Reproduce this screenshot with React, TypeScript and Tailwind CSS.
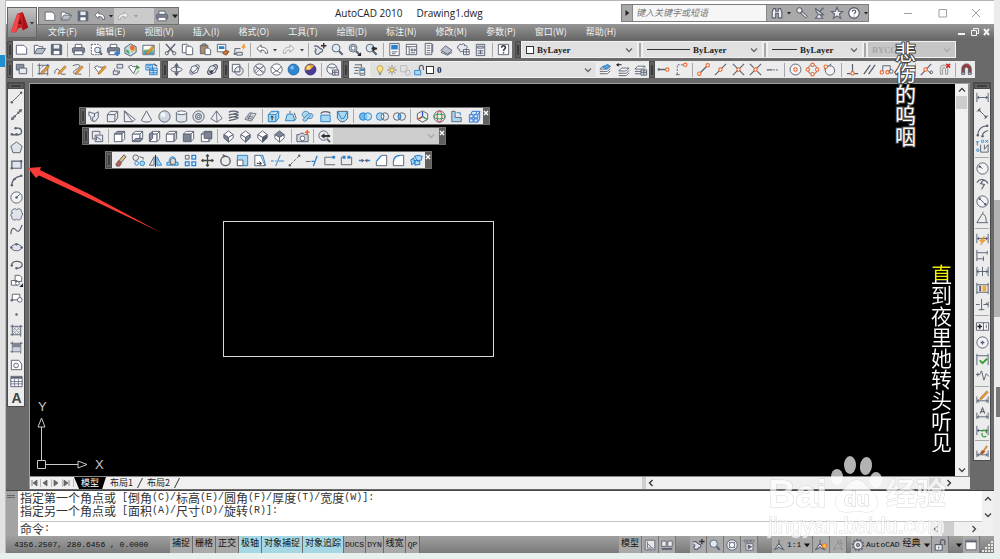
import type { ReactNode } from 'react';
import clsx from 'clsx';

const INK = '#5a6172';
const ORANGE = '#ea6a35';
const BLUE = '#2b82cc';
const PALE = '#a9d8f2';
const SHADE = '#cdd2da';

// All glyphs are drawn on a 16 x 16 grid, stroke colour comes from <Icon>
const floppy = (
  <>
    <path d="M2.5 2.5h10l1 1v10h-11z" fill="#5d6678" />
    <path d="M5 3h6v4H5z" fill="#e9edf2" stroke="none" />
    <path d="M5 9.5h6V13H5z" fill="#fff" stroke="none" />
  </>
);
const printer = (
  <>
    <path d="M4.5 6V2.5h7V6" fill="#fff" />
    <rect x="1.5" y="6" width="13" height="5.5" rx="1.5" fill="#7b818e" />
    <path d="M4 9.5h8l1 4H3z" fill="#fff" />
  </>
);
const sheet = <path d="M2.5 3.5h8l3 3v6.500h-11z" fill="#fff" />;
const folder = (
  <>
    <path d="M2.500 12.500v-9h4l1 1.500h4v2" fill="#fff" />
    <path d="M2.500 12.500l3-5.500h9l-3.500 5.500z" fill="#b9bfca" />
  </>
);
const undo = <path d="M2 7l4.500-4v2.500c4 0 7 1.500 7 6.500h-2.500c0-2.500-1.500-3.500-4.500-3.500V11z" fill="#fff" />;
const redo = (
  <path d="M14 7L9.500 3v2.500c-4 0-7 1.500-7 6.500H5c0-2.500 1.500-3.500 4.500-3.500V11z" fill="#eee" stroke="#a3a6ad" />
);
const lens = (
  <>
    <path d="M9.500 9.500l4 4" strokeWidth="2.200" />
    <circle cx="6.500" cy="6.500" r="4.200" fill="#dceaf2" />
  </>
);
const pencil = <path d="M6 11l6.500-7 1.500 1.500-6.500 7-2.200.5z" fill="#e9a03c" stroke="#a3641c" strokeWidth=".7" />;
const layers = <path d="M5 4.500h8l-3 3H2zM2 10h8l3-3M2 12.500h8l3-3" fill="#fff" />;
const node = (x: number, y: number) => <circle cx={x} cy={y} r="1.800" fill="#fff" stroke={ORANGE} strokeWidth="1.200" />;
const dot = (x: number, y: number) => <circle cx={x} cy={y} r="1.300" fill={INK} stroke="none" />;
const cube = (top: string, side: string, front: string) => (
  <>
    <path d="M2.500 5.500l3-3h8l-3 3z" fill={top} />
    <path d="M10.500 5.500l3-3v8l-3 3z" fill={side} />
    <path d="M2.500 5.500h8v8h-8z" fill={front} />
  </>
);
const isoCube = (top: string, left: string, right: string) => (
  <>
    <path d="M8 2l5 4-5 3-5-3z" fill={top} />
    <path d="M3 6l5 3v5L3 9.500z" fill={left} />
    <path d="M13 6L8 9v5l5-4.500z" fill={right} />
  </>
);
const dimension = <path d="M2 3v10M14 3v10M2.500 8h11M4.500 6.500L2.500 8l2 1.500M11.500 6.500l2 1.500-2 1.500" />;
const lowDimension = <path d="M2 7v7M14 7v7M2.500 11.500h11M4.500 10l-2 1.500 2 1.500M11.500 10l2 1.500-2 1.500" />;
const crop = <path d="M3.500 1.500v12M1.500 3.500h13M12.500 2v12.500M1.500 12.500H12" />;

const icons: Record<string, ReactNode> = {
  new: sheet,
  open: folder,
  save: floppy,
  print: printer,
  preview: (
    <>
      <path d="M2.500 2.500h8l2 2v9h-10z" fill="#fff" strokeDasharray="2 1" />
      <circle cx="9" cy="8.500" r="3" fill="#e4eef5" />
      <path d="M11 10.500l3 3" strokeWidth="2" />
    </>
  ),
  publish: (
    <>
      {printer}
      <path d="M9 12h6M12 9v6" stroke={BLUE} strokeWidth="2" />
    </>
  ),
  dwf: (
    <>
      <path d="M2 6l6-4 6 3v6l-6 4-6-3z" fill="#b9dcef" />
      <path d="M7 5l4-1.500L13 9l-4 2z" fill="#f0b840" stroke="none" />
      <path d="M3 8l3 1 1 4-3-2z" fill="#4ca44c" stroke="none" />
      <circle cx="10" cy="6" r="2.500" fill="#e66a3a" stroke="none" />
    </>
  ),
  markup: (
    <>
      <path d="M2 3.500h12v10H2z" fill="#fff" />
      <path d="M2.500 8h11v5h-11z" fill="#8fba5b" stroke="none" />
      <path d="M2.500 10l4-1 3 2 4-1v3h-11z" fill="#4fa0c9" stroke="none" />
      {pencil}
    </>
  ),
  cut: (
    <>
      <path d="M3 2l8 9M13 2l-8 9" strokeWidth="1.600" />
      <circle cx="4" cy="12" r="1.700" />
      <circle cx="12" cy="12" r="1.700" />
    </>
  ),
  copyClip: (
    <>
      <path d="M2.500 2.500h5l2 2v7h-7z" fill="#fff" />
      <path d="M6.500 4.500h5l2 2v7h-7z" fill="#fff" />
    </>
  ),
  paste: (
    <>
      <path d="M2.500 3.500h8v9h-8z" fill="#b38b62" />
      <path d="M4.500 2h4v2h-4z" fill="#aaa" />
      <path d="M7.500 6.500h4l2 2v5h-6z" fill="#fff" />
    </>
  ),
  matchProps: (
    <>
      <path d="M2.500 2.500h9v8h-9z" fill="#fff" />
      <path d="M4 4.500h6v3H4z" fill={BLUE} stroke="none" />
      <path d="M8 12l3-3 4 1-3 4z" fill="#c9773a" stroke="#7d4a22" />
    </>
  ),
  blockEdit: (
    <>
      <path d="M3 11V7h6M5 11h6v3H5z" fill="#dfe4ea" />
      {dot(3, 12.5)}
      <path d="M12 2l-2 4h2l-1 3 4-4.500h-2l1-2.500z" fill="#f0a030" stroke="none" />
    </>
  ),
  undo,
  redo,
  pan: (
    <>
      <path d="M2 4.500c3-1 5 .5 6 2l3 1.500c1 1.500-.5 3-2 3l-2 2H4.500L3 10c2-1 2-2 0-3" fill="#dfe3ea" strokeWidth="1.200" />
      <path d="M12.500 1v6M9.500 4h6" stroke="#333" strokeWidth="1.500" />
    </>
  ),
  zoom: lens,
  zoomWindow: (
    <>
      {lens}
      <path d="M4.500 4.500h4v4h-4z" fill="#fff" />
      <path d="M15 15h-4l4-4z" fill="#222" stroke="none" />
    </>
  ),
  zoomPrev: (
    <>
      {lens}
      <path d="M14 7L9 4.500V10z" fill="#222" stroke="none" />
      <path d="M14 7l-6 0" strokeWidth="2" stroke="#333" />
    </>
  ),
  props: (
    <>
      <path d="M3 1.500h10v13H3z" fill="#fff" />
      <path d="M4.500 3h7v5h-7z" fill={BLUE} stroke="none" />
      <path d="M5 10.500h6M5 12.500h4" />
    </>
  ),
  designCenter: (
    <>
      <path d="M2.500 2.500h11v11h-11z" fill="#fff" />
      <path d="M2.500 5h11M5.500 5v8M7.500 7.500h2v2h-2zM11 7.500h1v2h-1zM7 11.500h5" />
    </>
  ),
  toolPalette: (
    <>
      <path d="M4.500 1.500h7v12h-7z" fill="#fff" />
      <path d="M12.500 2v9M6 4h4M6 6.500h4M6 9h4M6 11.500h4" />
    </>
  ),
  sheetSet: (
    <>
      <path d="M2 9l5-5 7 5-5 4z" fill="#bcc3ce" />
      <path d="M2 11l7 3 5-3" />
    </>
  ),
  markupSet: (
    <>
      <path d="M3 4c0-2 3-2 3-1 1-2 4-1 3 1 3-1 4 2 2 3v3c-1 2-3 1-4 0-2 1-4 0-3-2-3 0-3-4-1-4z" fill="#e6eaf0" />
      <path d="M8 8h6v5.500H8zM8 10.500h6M11 8v5" fill="#fff" />
    </>
  ),
  calc: (
    <>
      <path d="M3.500 2.500h9v12h-9z" fill="#e9ecf1" />
      <path d="M5 4.500h6v2H5zM5 9.500h6M5 12h6M8 8.500v4.500" />
    </>
  ),
  help: (
    <>
      <path d="M2.500 2.500h11v11h-11z" fill="#fff" />
      <path d="M6 6c0-2.500 4-2.500 4 0 0 1.500-2 1.500-2 3.500M8 11v1.200" strokeWidth="1.600" stroke="#333" />
    </>
  ),
  drawOrder: (
    <>
      <path d="M2.500 2.500h8v6h-8z" fill="#8a919e" />
      <path d="M5.500 6.500h8v6h-8z" fill="#e6e9ee" />
    </>
  ),
  editHatch: (
    <>
      {crop}
      <path d="M4 8l4-4M4 12l8-8" strokeDasharray="1 1" />
      {pencil}
    </>
  ),
  editPline: (
    <>
      <path d="M2 12.500c-1-4 3-7 5-3l2 3.500h4.500" />
      {pencil}
    </>
  ),
  editSpline: (
    <>
      <path d="M3 4c7-3 10 0 5 3s-8 6 4 6" />
      {pencil}
    </>
  ),
  attrEdit: (
    <>
      <path d="M1.500 5.500l3-1.500 2 1.500h4L7 12.500z" fill="#fff" />
      {pencil}
    </>
  ),
  blockAttr: (
    <>
      <path d="M7.500 2.500h6v4h-6zM3.500 9.500h5v4h-5zM5 9V7M10 9v3h-1.500" fill="#dfe4ea" />
    </>
  ),
  syncAttr: (
    <>
      <path d="M1.500 5l3-1.500 2 1.500h4L7 12.500z" fill="#fff" />
      <path d="M10 3l4 3-4 2z" fill="#3f9a3f" stroke="none" />
      <path d="M12 9c0 2-1 3-3 4" stroke="#3f9a3f" />
    </>
  ),
  extractAttr: (
    <>
      <path d="M2 2.500h7v6H2zM6 6.500h8v7H6z" fill="#cfe6f6" stroke={BLUE} />
      <path d="M6 9h8M6 11.500h8M10 7v6M3 4h5M3 6h3" stroke={BLUE} />
      <path d="M10 2l4 2.500" stroke={INK} strokeWidth="1.500" />
    </>
  ),
  orbit: (
    <>
      <ellipse cx="8" cy="8" rx="6" ry="2.500" />
      <path d="M8 2v12M6 5l2-3 2 3M6 11l2 3 2-3" strokeWidth="1.400" />
    </>
  ),
  freeOrbit: (
    <>
      <ellipse cx="8" cy="8" rx="6.500" ry="3" transform="rotate(-45 8 8)" />
      <circle cx="8" cy="8" r="4" fill="#eef1f5" />
      <path d="M5 11c2 0 5-2 6-5" />
    </>
  ),
  contOrbit: (
    <>
      <ellipse cx="8" cy="8" rx="6.500" ry="3" transform="rotate(-45 8 8)" strokeWidth="1.400" />
      <circle cx="8" cy="8" r="4" fill="#e3e7ec" />
      <path d="M5 11c2 0 5-2 6-5" />
      <path d="M5 9l4 0-2 4z" fill="#333" stroke="none" />
    </>
  ),
  wire2d: (
    <>
      <path d="M2.500 2.500h8v8h-8z" fill="#f7f7f7" />
      <circle cx="9.500" cy="9.500" r="4.500" fill="#e3e7ec" fillOpacity=".7" />
      <path d="M10.500 5v5.500H5" />
    </>
  ),
  wire3d: (
    <>
      <circle cx="8" cy="8" r="6" fill="#f4f4f4" />
      <path d="M3.500 4.500c2 3 7 3 9 0M3 11c2-5 3-5 5-3s3 1 5 3M4 4l8 8M12 4l-8 8" strokeWidth=".8" />
    </>
  ),
  hidden3d: (
    <>
      <circle cx="8" cy="8" r="6" fill="#fff" />
      <path d="M3 5l5 5 5-5M4 12l4-3 4 3" />
    </>
  ),
  realistic: (
    <>
      <circle cx="8" cy="8" r="5.800" fill="#2f86cf" stroke="#1f66a8" />
      <circle cx="6.500" cy="6" r="2" fill="#7cbcf0" stroke="none" />
    </>
  ),
  conceptual: (
    <>
      <circle cx="8" cy="8" r="5.800" fill="#4b3a96" stroke="#3b2c7a" />
      <path d="M2.500 9A5.800 5.800 0 0112 4L8 8z" fill="#e9a13a" stroke="none" />
      <circle cx="6" cy="6" r="2" fill="#ffdf80" stroke="none" />
    </>
  ),
  visualMgr: (
    <>
      <circle cx="7.500" cy="7.500" r="5.500" fill="#f4f4f4" />
      <path d="M3 5c3 2 6 2 9 0M8 8.500h6.500v5.500H8zM8 11h6M10.500 9v5" fill="#dfe4ea" />
    </>
  ),
  layerMgr: (
    <>
      <path d="M3 3h7M2 6h6M3 9h4M2 12h5M10 2v4" />
      <path d="M8.500 6.500h5v7.500h-5z" fill="#fff" />
      <path d="M9 7.500h4v2H9z" fill={BLUE} stroke="none" />
      <path d="M9 12h4" />
    </>
  ),
  layerCurrent: (
    <>
      {layers}
      <path d="M5 5.500l5-3 3 2-4 3z" fill="#52a5e0" stroke={BLUE} />
    </>
  ),
  layerPrev: (
    <>
      <g transform="translate(2 2)">{layers}</g>
      <path d="M1 3l3-2v1.500h3v1H4V5z" fill="#222" stroke="none" />
    </>
  ),
  layerState: (
    <>
      {layers}
      <path d="M8.500 8.500h6v5.500h-6zM8.500 11h6M11.500 8.500v5" fill="#dfe4ea" />
    </>
  ),
  track: <>{node(12, 8)}<path d="M4 8h6" strokeWidth="1.500" />{dot(3, 8)}</>,
  snapFrom: <>{node(12, 3)}<path d="M3.500 13V3H10" strokeDasharray="2 1.500" /><path d="M2 13.500h4" /></>,
  endpoint: <><path d="M4 12l8-8" strokeWidth="1.400" />{node(3.5, 12.5)}{node(12.5, 3.5)}</>,
  midpoint: <><path d="M2 14L14 2" strokeWidth="1.200" />{node(8, 8)}</>,
  intersection: <><path d="M2 14L14 2M2 2l12 12" strokeWidth="1.200" />{node(8, 8)}</>,
  apparent: <><path d="M2 14L14 2M2 2l4 4M10 10l4 4" strokeWidth="1.200" />{node(8, 8)}</>,
  extension: <path d="M2 8.500h6M9 8.500h1.500M12 8.500h1.500" strokeWidth="1.300" />,
  center: <><circle cx="8" cy="8" r="5.800" fill="#f2f3f6" />{node(8, 8)}</>,
  quadrant: <><circle cx="8" cy="8" r="5" />{node(8, 3)}{node(8, 13)}{node(3, 8)}{node(13, 8)}</>,
  tangent: <><circle cx="8.500" cy="9" r="5" fill="#f2f3f6" /><path d="M2 8l8-6" />{node(4, 5)}</>,
  perpendicular: <><path d="M8 2v9M2 12.500h12" strokeWidth="1.300" />{node(8, 12)}</>,
  parallel: <path d="M2 13L9 3M7 13l7-10" strokeWidth="1.400" />,
  insertion: <><path d="M4 10V4h8v5" />{node(3, 11)}{node(9, 11)}<circle cx="13" cy="10" r="2" /></>,
  nodeSnap: node(8, 8),
  nearest: <><path d="M2 14L13 2" strokeWidth="1.200" />{node(7, 8)}<path d="M9 9l4 3" /><circle cx="13" cy="11" r="1.500" /></>,
  snapNone: (
    <>
      <path d="M3.500 13V7a4 4 0 018 0v6H9V7.500a1.500 1.500 0 00-3 0V13z" fill="#ddd" stroke="#999" />
      <path d="M10 2l4 4M14 2l-4 4" stroke="#d22" strokeWidth="1.600" />
    </>
  ),
  snapSettings: (
    <>
      <path d="M3 13V7a5 5 0 0110 0v6h-3V7.500a2 2 0 00-4 0V13z" fill="#9c3b36" />
      <path d="M3 11h3v2H3zM10 11h3v2h-3z" fill="#eee" />
    </>
  ),
  // solids
  polysolid: <path d="M2 3l6 2v3l-2 1v4L4 11V8L2 7zM8 5l4-2v6l-3 4H6M8 5v3" fill="#e7eaef" />,
  box: <path d="M2.500 6l3-3.500h8v7l-3 4h-8zM2.500 6h8l3-3.500M10.500 6v7.500" fill="#eceef2" />,
  wedge: <path d="M2.500 2v11.500h9L14 11zM2.500 2l9 11.500" fill="#eceef2" />,
  cone: <path d="M8 2L2.500 12c2 2.500 9 2.500 11 0z" fill="#eceef2" />,
  sphere: <><circle cx="8" cy="8" r="6" fill="#cfd8e2" /><circle cx="6.500" cy="6" r="2.500" fill="#f4f7fa" stroke="none" /></>,
  cylinder: <><path d="M2.500 4v8.500c2 2 9 2 11 0V4" fill="#dfe4ea" /><ellipse cx="8" cy="4" rx="5.500" ry="2" fill="#f8f9fa" /></>,
  torus: <><circle cx="8" cy="8" r="6" fill="#e3e7ec" /><circle cx="8" cy="8" r="3.200" fill="#c7cdd6" /><circle cx="8" cy="8" r="1.200" fill="#fff" /></>,
  pyramid: <path d="M8 2L2 10.500l6.500 3.500 5.500-4zM8 2l.5 12" fill="#eceef2" strokeWidth=".9" />,
  helix: <path d="M3 3.500c2-1.500 8-1.500 10 0-2 2-8 2-10 3 2-1.500 8-1.500 10 0-2 2-8 2-10 3 2-1.500 8-1.500 10 0-2 2-8 2-10 3" strokeWidth="1.300" />,
  planar: <path d="M2 11l5-7 7 1-5 8zM5 7l6 2M4 9l6 2M9 4l-4 8" fill="#cfd3da" strokeWidth=".8" />,
  extrude: <><path d="M2.500 6l3-3.500h8v7l-3 4h-8zM2.500 6h8l3-3.500M10.500 6v7.500" fill={PALE} stroke={BLUE} /><path d="M6.500 12V8M5 9l1.500-1.500L8 9" stroke="#222" /></>,
  presspull: <><path d="M4.500 5.500h6l2 7h-10z" fill={PALE} stroke={BLUE} /><path d="M12.500 12L14 10l-2-6M7.500 5V2" /></>,
  sweep: <path d="M3.500 3.500c2-2 6-1 6 1.500h3c2 1 1.500 4-.5 5H8c0 3.500-4.500 4-5 1.500L5 9C2 8.500 1.500 5.500 3.500 3.500zM5 9l4.500-4M8 10l4-4" fill={PALE} stroke="#4d83ad" />,
  revolve: <><path d="M3 6.500h10v7H3z" fill={PALE} stroke={BLUE} /><path d="M3 5c1-3 9-3 10 0l-1-2" strokeWidth="1.300" /></>,
  loft: <><path d="M2.500 2.500h11V10L10 13.500H6L2.500 10z" fill={PALE} /><path d="M3 3l3.500 7h3L13 3" stroke={BLUE} /></>,
  union: <><circle cx="5.500" cy="8" r="4" fill="#6fbdf0" stroke={BLUE} /><circle cx="10.500" cy="8" r="4" fill={PALE} fillOpacity=".6" stroke={BLUE} /></>,
  subtract: <><circle cx="10.500" cy="8" r="4" /><circle cx="5.500" cy="8" r="4" fill={PALE} stroke={BLUE} /><path d="M8 5a4 4 0 000 6 4 4 0 000-6z" fill="#fff" /></>,
  intersect: <><circle cx="5.500" cy="8" r="4" /><circle cx="10.500" cy="8" r="4" /><path d="M8 5a4 4 0 000 6 4 4 0 000-6z" fill="#6fbdf0" stroke={BLUE} /></>,
  move3d: <><path d="M8 2l5.500 3v6L8 14l-5.500-3V5z" fill="#eee" /><path d="M8 8V3" stroke="#2a52c8" strokeWidth="1.400" /><path d="M8 8l-4.500 3" stroke="#b22" strokeWidth="1.400" /><path d="M8 8l4.500 3" stroke="#2a9340" strokeWidth="1.400" /></>,
  rotate3d: <><circle cx="8" cy="8" r="6" /><ellipse cx="8" cy="8" rx="2.500" ry="6" stroke="#c33" /><ellipse cx="8" cy="8" rx="6" ry="2.500" stroke="#2a9340" /></>,
  align3d: <><path d="M3 2.500h3.500V9H13v4.500H3z" fill={PALE} /><path d="M8 4h4v3" stroke={BLUE} /></>,
  array3d: <path d="M2.500 6h4v3.500h-4zM7.500 6h4v3.500h-4zM2.500 10.500h4V14h-4zM7.500 10.500h4V14h-4zM4 6l1.500-3.500h8V11l-2 3M9 6l2-3.500M11.500 6L14 2.500" fill="#d5ebf9" stroke="#2f6fd0" />,
  // views
  namedViews: <><path d="M2.500 2.500h8v3M2.500 2.500v8h3" /><path d="M5.500 6.500h8v7h-8z" fill="#e6e9ee" /><path d="M7 12V8l5 4" /></>,
  viewTop: cube('#8f97a5', '#fff', '#fff'),
  viewBottom: <>{cube('#fff', '#fff', '#fff')}<path d="M3 13l3-3h7l-2 3z" fill="#8f97a5" /></>,
  viewLeft: <>{cube('#fff', '#fff', '#fff')}<path d="M3 6l3-3v7l-3 3z" fill="#8f97a5" /></>,
  viewRight: cube('#fff', '#c3c9d2', '#fff'),
  viewFront: cube('#fff', '#fff', '#7d8594'),
  viewBack: <>{cube('#fff', '#fff', '#fff')}<path d="M5.500 3h8v7h-8z" fill="#7d8594" /></>,
  isoSW: isoCube('#fff', '#7d8594', '#fff'),
  isoSE: isoCube('#fff', '#fff', '#7d8594'),
  isoNE: isoCube('#fff', '#fff', '#525a69'),
  isoNW: isoCube('#7d8594', '#fff', '#fff'),
  camera: <><path d="M2 6h3l1-1.500h3L10 6h4v7.500H2z" fill="#d5d9df" /><circle cx="8" cy="10" r="2.500" fill="#fff" /><path d="M13 1v5M10.500 3.500h5" stroke={ORANGE} strokeWidth="1.700" /></>,
  viewPrev: <><circle cx="7" cy="7" r="5" fill="#e9edf1" /><path d="M11 11l3 3" strokeWidth="2" /><path d="M4 7.500l4-3v2h6v2H8v2z" fill="#333" stroke="none" /></>,
  // modify
  erase: <><path d="M3 12l3-4 3 3-2 3H4z" fill="#d5543f" /><path d="M6.500 8l5-6 2.500 2-5 6z" fill="#e7bb72" /></>,
  copy: <><circle cx="5" cy="5" r="3" /><circle cx="6" cy="11" r="2" stroke={BLUE} /><circle cx="12" cy="11" r="2.500" fill={PALE} stroke={BLUE} /><path d="M9 4l4 1v2" /></>,
  mirror: <><path d="M6.500 4v9H1.500z" fill="#e6e9ee" /><path d="M9.500 4v9h5z" fill={PALE} stroke={BLUE} /><path d="M8 2v13" stroke="#222" /></>,
  offset: <><path d="M2 13h12v-3h-2.500c1-8-8-8-7 0H2z" fill={PALE} stroke={BLUE} /><path d="M5 12h6V8c0-3-5-3-5 0v4" fill="#ddd" /></>,
  array: <><path d="M2.500 2.500h4v4h-4z" /><path d="M9.500 2.500h4v4h-4zM2.500 9.500h4v4h-4zM9.500 9.500h4v4h-4z" fill="#d5ebf9" stroke={BLUE} strokeWidth="1.300" /></>,
  move: <path d="M8 2v12M2 8h12M6.500 3.500L8 2l1.500 1.500M6.500 12.500L8 14l1.500-1.500M3.500 6.500L2 8l1.500 1.500M12.500 6.500L14 8l-1.500 1.500" stroke="#444" strokeWidth="1.400" />,
  rotate: <><circle cx="8" cy="8.500" r="5" strokeWidth="1.500" /><path d="M5 1v4l4-1.500z" fill={INK} stroke="none" /></>,
  scale: <><path d="M2.500 2.500h11v11h-11z" fill={PALE} stroke={BLUE} /><path d="M2.500 7.500h6v6h-6z" fill="#fff" /></>,
  stretch: <><path d="M3 2.500h6L14 13.500H3z" fill="#fff" /><path d="M9 2.500h2.500L14.500 13.500" fill={PALE} stroke={BLUE} /><path d="M5 11h5M8 9l2 2-2 2" stroke="#222" /></>,
  trim: <><path d="M1 8.500h3M5.500 8.500H7M9 8.500h6" stroke={BLUE} /><path d="M6 14l5-12" stroke={BLUE} /></>,
  lengthen: <><path d="M4 12l8-8" strokeDasharray="3 1.500" />{dot(3, 13)}{dot(13, 3)}</>,
  extend: <><path d="M2 9h5" /><path d="M8 9h3M10 14l4-11" stroke={BLUE} strokeWidth="1.400" /></>,
  breakAt: <><path d="M13 4.500H3v8h11" /><rect x="11" y="3" width="3" height="3" fill={BLUE} stroke="none" /></>,
  break: <><path d="M5 4.500H2.500v8h11v-8H11" /><path d="M4 3h3v3H4zM9 3h3v3H9z" fill={BLUE} stroke="none" /></>,
  join: <><path d="M2 8h4M10 8h4" stroke={BLUE} strokeWidth="1.400" /><path d="M5 6l3 2-3 2zM11 6L8 8l3 2z" fill={INK} stroke="none" /></>,
  chamfer: <><path d="M8 2.500h5.500v11h-11V9" fill="#fff" /><path d="M2.500 9L8 2.500" stroke={BLUE} strokeWidth="1.400" /></>,
  fillet: <><path d="M10 2.500h3.500v11h-11V10" fill="#fff" /><path d="M2.500 10c0-5 3-7.500 7.500-7.500" stroke={BLUE} strokeWidth="1.400" /></>,
  explode: <path d="M6 3.500l4-1 4 1-1 4-4 1zM2 7.500l3-2 1 5-3 2zM6.500 8l5 0v4l-5 1z" fill={PALE} stroke={BLUE} strokeWidth="1.100" />,
  // draw
  line: <><path d="M3.500 12.500l9-9" />{dot(3, 13)}{dot(13, 3)}</>,
  xline: <><path d="M3 13L13 3" />{dot(6, 10)}{dot(10, 6)}<path d="M2 14l1-4 3 3zM14 2l-1 4-3-3z" fill={INK} stroke="none" /></>,
  pline: <><path d="M3 12.500h6M5 12.500h5c5 0 4-7 0-7H7" strokeWidth="1.400" />{dot(3, 12)}{dot(8, 12)}{dot(7, 5.5)}</>,
  polygon: <path d="M8 2l6 4.500-2.200 7H4.200L2 6.500z" fill="#dfe4ea" />,
  rect: <><path d="M3 4.500h10v7.500H3z" fill="#dfe4ea" strokeWidth="1.300" />{dot(3, 12)}{dot(13, 4.5)}</>,
  arc: <><path d="M3 13c0-6 5-9 10-10" strokeWidth="1.300" />{dot(3, 13)}{dot(6, 6.5)}{dot(13, 3)}</>,
  circle: <><circle cx="8" cy="8" r="6" fill="#f2f3f6" /><path d="M8 8l3.500-3.500" />{dot(8, 8)}</>,
  revcloud: <path d="M4 3c2-2 4-1 4 0 2-2 6-1 5 2 2 1 2 4 0 5 1 3-3 5-5 3-2 2-6 0-5-3-2-1-1-3 1-3.500C2 6 2 4 4 3z" fill="#dfe4ea" />,
  spline: <path d="M2 12c0-5 2-8 5-5s4 3 7-5" strokeWidth="1.300" />,
  ellipse: <><ellipse cx="8" cy="8" rx="5.500" ry="3.500" fill="#dfe4ea" />{dot(2.5, 8)}{dot(13.5, 8)}{dot(8, 4.5)}</>,
  ellipseArc: <><path d="M3 9c-2-5 11-6 11-1 0 3-3 4-6 4" strokeWidth="1.300" />{dot(3, 9)}{dot(8, 12)}</>,
  insertBlock: <><path d="M6.500 2.500h5l2 2V9h-7zM2.500 8h6v5h-6z" fill="#fff" /><circle cx="9" cy="11" r="2" fill="#fff" /><path d="M15 15h-4l4-4z" fill="#222" stroke="none" /></>,
  makeBlock: <><path d="M3.500 4.500h8v6h-8z" fill="#fff" />{dot(3, 11)}<circle cx="11.500" cy="10.500" r="2.500" fill="#fff" /></>,
  point: dot(8, 8),
  hatch: <>{crop}<path d="M4 8l4-4M4 12l8-8M8 12l4-4M4 4l8 8M8 4l4 4M4 8l4 4" strokeWidth=".5" /></>,
  gradient: <>{crop}<path d="M4 4h8v4H4z" fill="#7d8594" stroke="none" /><path d="M4 8h8v4H4z" fill={SHADE} stroke="none" /></>,
  region: <><path d="M2.500 3.500h8l3 4v6h-11z" fill="#fff" /><circle cx="7.500" cy="9" r="2.500" /></>,
  table: <><path d="M2 2.500h12v11H2z" fill="#fff" /><path d="M2 3h12v2H2z" fill={INK} stroke="none" /><path d="M2 8h12M2 10.500h12M6 5v8M10 5v8" strokeWidth=".8" /></>,
  mtext: (
    <text x="8" y="13.500" textAnchor="middle" fontSize="15" fontWeight="700" fill="#444" stroke="none" fontFamily="Liberation Sans, sans-serif">
      A
    </text>
  ),
  // dimension
  dimLinear: dimension,
  dimAligned: <><path d="M2 6l4-4M10 14l4-4M4.500 4.500l7 7" />{dot(4.5, 4.5)}{dot(11.5, 11.5)}</>,
  dimArc: <><path d="M3 13C3 7 7 3 13 3M8 14c0-3 2-5 6-6" strokeWidth="1.300" />{dot(3, 13)}{dot(13, 3)}{dot(8, 14)}</>,
  dimOrdinate: <><path d="M6 6v8h8M10 6v5l4-5v8" /><path d="M1 3h3M2.500 3v4M11 1l3 3M14 1l-3 3" stroke={BLUE} /><circle cx="3" cy="12" r="1.300" stroke={BLUE} /><circle cx="8" cy="2.500" r="1.300" stroke={BLUE} /></>,
  dimRadius: <><circle cx="8" cy="8" r="6" fill="#f2f3f6" /><path d="M8 8L4 5" />{dot(5, 6)}</>,
  dimJogged: <path d="M2 6c3-5 9-4 12 1M9 3L6 7l4 1-3 5" strokeWidth="1.200" />,
  dimDiameter: <><circle cx="8" cy="8" r="6" fill="#f2f3f6" /><path d="M4 4l8 8" />{dot(5, 5)}{dot(11, 11)}</>,
  dimAngular: <path d="M2 13.500h12M2 13.500L9 2M8 4c3 1 4 4 4 9" />,
  dimQuick: <>{dimension}<path d="M9 6l-4 5h2.500L6 15l5-5.500H8.500L10 6z" fill="#f7a62c" stroke="#d97a14" strokeWidth=".5" /></>,
  dimBaseline: <path d="M2 2v12M13 3v4M9 9v5M2 5h11M2 11.500h7" />,
  dimContinue: <path d="M2 3v10M8 3v10M14 3v10M2 8h12M4 6L2.500 8 4 10M12 6l1.500 2L12 10" />,
  dimSpace: <><path d="M2 2v12M14 2v12M2 4h12M2 12h12" /><path d="M8 5h4v6H8z" fill="#f0a838" stroke="none" /><path d="M5.500 5v6" strokeWidth="2" /></>,
  dimBreak: <path d="M7 2v12M4 13.500h6M1 8h4M9 8h5M14 5v6M11.500 6.500L14 8" />,
  tolerance: <><path d="M1.500 4h13v8h-13zM9 4v8" fill="#fff" /><path d="M5 5.500v5M2.500 8h5" strokeWidth="1.700" stroke="#222" /><path d="M12 6v4" /></>,
  centerMark: <><circle cx="8" cy="8" r="6" fill="#f2f3f6" /><path d="M8 6v4M6 8h4" strokeWidth="1.400" /></>,
  inspect: <><path d="M2 2v12M14 2v12M2 4h12" /><path d="M5 9l3 3 5-5" stroke="#2f9e2f" strokeWidth="2" /></>,
  dimJogLine: <path d="M1 7h4l2-4 2.500 10L12 6l3 3M3 5v4" />,
  dimEdit: <>{lowDimension}<g transform="translate(0 -3)">{pencil}</g></>,
  dimTextEdit: <>{lowDimension}<path d="M5.500 8L8 2l2.500 6M6.500 6h3" strokeWidth="1.200" /></>,
  dimUpdate: <>{dimension}<path d="M7 9c3-3 6 0 5 2M12 14c-3 2-6-1-4-3" stroke="#3f9a3f" strokeWidth="1.400" /></>,
  dimStyle: <>{lowDimension}<path d="M5 10l3-4 3 2-3 3z" fill="#a5542c" stroke="none" /><path d="M9.500 7L13 2" stroke="#c98b4b" strokeWidth="2" /></>,
  // title bar
  binoculars: <path d="M2.500 13.500V7l1.500-4h2.500v3h3V3H12l1.500 4v6.500h-4v-5h-3v5z" fill="#eee" strokeWidth="1.300" />,
  key: <><path d="M7 7l6.500 6" stroke={INK} strokeWidth="3.500" /><path d="M7 7l6 5.500" stroke="#eee" strokeWidth="1.500" /><circle cx="5" cy="5" r="3" fill="#eee" strokeWidth="1.200" /></>,
  dish: <path d="M3 3c0 5 4 8 9 7L3 3zM8 6l4-4M6 10l-3 4h8l-3-4" fill="#eee" strokeWidth="1.300" />,
  star: <path d="M8 1.500l1.800 4.500 4.700.2-3.700 3 1.300 4.800L8 11.300 3.900 14l1.300-4.800-3.700-3L6.200 6z" fill="#eee" strokeWidth="1.300" />,
  helpRound: <><circle cx="8" cy="8" r="6" fill="#fff" strokeWidth="1.500" /><path d="M6 6.500c0-2.500 4-2.500 4 0C10 8 8 8 8 9.500M8 11v1" strokeWidth="1.500" /></>,
  // layer state marks
  bulb: <><path d="M8 2a4 4 0 00-2.500 7L6 11h4l.5-2A4 4 0 008 2z" fill="#fbe08a" stroke="#b08c28" /><path d="M6.500 12.500h3M7 14h2" /></>,
  sun: <><circle cx="8" cy="8" r="3" fill="#fbe08a" stroke="#8a7126" /><path d="M8 1.500v2M8 12.500v2M1.500 8h2M12.500 8h2M3.500 3.500L5 5M11 11l1.500 1.500M12.500 3.500L11 5M5 11l-1.500 1.500" /></>,
  vpFreeze: <><path d="M3 3h7v7H3z" stroke="#b5b7bd" /><circle cx="11" cy="11" r="3" stroke="#b5b7bd" /></>,
  unlock: <><path d="M3 8.500h7v5H3z" fill={PALE} stroke={BLUE} /><path d="M8.500 8V5c0-3 4.500-3 4.500 0v3" strokeWidth="1.400" /></>,
  // status bar
  layoutSpace: <><path d="M2.500 2.500h11v11h-11z" fill="#e8e8e8" /><path d="M5 4v7.500h7M6 7l4 4" /></>,
  quickView: <><path d="M2 3.500h5v6H2zM9 3.500h5v6H9z" fill="#eee" /><path d="M2 12.500h12" strokeWidth="2" /></>,
  wheel: <><circle cx="8" cy="8" r="6" fill="#e3e7ec" /><circle cx="8" cy="8" r="3" fill="#fff" /><path d="M4 4l2 2M12 4l-2 2M4 12l2-2M12 12l-2-2" /></>,
  showMotion: <><path d="M2.500 2.500h3v2h-3zM6.500 2.500h3v2h-3zM10.500 2.500h3v2h-3zM4.500 6.500h8v7.500h-8z" fill="#eee" /><path d="M7 8l4 2-4 2.500z" fill={INK} /></>,
  annoScale: <path d="M8 2v4l5 7-3-1-2-2-2 2-3 1 5-7" fill="#eee" strokeWidth="1.200" />,
  annoVisible: <><path d="M7 2v4l5 7-3-1-2-2-2 2-3 1 5-7" fill="#eee" strokeWidth="1.200" /><circle cx="12" cy="9" r="2.500" fill="#ffc23c" stroke={ORANGE} /></>,
  annoAuto: <path d="M8 2v4l5 7-3-1-2-2-2 2-3 1 5-7M11 2l-1 4h3l-2 4" fill="#bbb" stroke="#888" />,
  gear: <><circle cx="8" cy="8" r="5" fill="#eee" strokeWidth="1.200" /><circle cx="8" cy="8" r="6.500" strokeDasharray="2 2" strokeWidth="1.500" /><circle cx="8" cy="8" r="2" fill="#999" /></>,
  padlock: <><path d="M2.500 7.500h8v6.500h-8z" fill="#eee" strokeWidth="1.300" /><path d="M8.500 7V4c0-3 5-3 5 0v4M6.500 10v2" strokeWidth="1.500" /></>,
  cleanScreen: <><path d="M2 2.500h12v11H2z" fill="#fff" /><path d="M2 3h12v2H2z" fill={INK} stroke="none" /></>,
};

interface IconProps {
  name: string;
  className?: string;
}

const Icon = ({ name, className = 'size-4' }: IconProps) => (
  <svg viewBox="0 0 16 16" className={clsx('shrink-0', className)} fill="none" stroke={INK} aria-hidden="true">
    {icons[name]}
  </svg>
);

const Chevron = ({ className }: { className?: string }) => (
  <svg viewBox="0 0 8 8" className={clsx('size-2 shrink-0', className)} fill="none" stroke="currentColor" strokeWidth="1.300">
    <path d="M1 2.500l3 3 3-3" />
  </svg>
);

const Caret = ({ className = 'size-1.5' }: { className?: string }) => (
  <svg viewBox="0 0 8 8" className={clsx('shrink-0', className)} fill="currentColor">
    <path d="M0 2h8L4 7z" />
  </svg>
);

const Grip = ({ vertical = false }: { vertical?: boolean }) => (
  <div
    className={clsx(
      'flex shrink-0 items-center justify-center border border-[#4b4b4b] bg-[#606060]',
      vertical ? 'h-1.5 w-full' : 'h-full w-1.5',
    )}
  >
    <div className={clsx('border-[#3c3c3c]', vertical ? 'h-0.5 w-2.5 border-y' : 'h-2.5 w-0.5 border-x')} />
  </div>
);

interface StripProps {
  items: string;
  vertical?: boolean;
  className?: string;
}

// "|" is a separator, "v" the small arrow beside undo and redo
const IconStrip = ({ items, vertical = false, className }: StripProps) => (
  <div className={clsx('flex shrink-0 bg-[#ececec]', vertical ? 'flex-col items-center' : 'h-full items-center', className)}>
    {items.split(' ').map((item, i) => {
      if (item === '|') {
        return (
          <div key={i} className={clsx('flex shrink-0 items-center justify-center', vertical ? 'h-[5px] w-full' : 'h-full w-[5px]')}>
            <div className={clsx('bg-[#a8a8a8]', vertical ? 'h-px w-3.5' : 'h-3.5 w-px')} />
          </div>
        );
      }
      if (item === 'v') {
        return (
          <button key={i} aria-label="more" className="flex w-[9px] shrink-0 items-center justify-center text-[#444]">
            <Caret className="size-1" />
          </button>
        );
      }
      return (
        <button key={i} title={item} className="flex min-h-0 min-w-0 flex-1 items-center justify-center">
          <Icon name={item} className="size-[15px]" />
        </button>
      );
    })}
  </div>
);

interface ListBoxProps {
  label: string;
  value: string;
  className: string;
  children?: ReactNode;
  disabled?: boolean;
}

const ListBox = ({ label, value, className, children, disabled }: ListBoxProps) => (
  <div
    className={clsx(
      'flex h-full items-center gap-[3px] border border-[#f2f2f2] pr-1 pl-1',
      disabled ? 'bg-[#c6c6c6] text-[#999]' : 'bg-[#e1e1e1] text-[#222]',
      className,
    )}
  >
    {children}
    <select
      aria-label={label}
      disabled={disabled}
      className={clsx(
        "min-w-0 flex-1 appearance-none bg-transparent font-['Liberation_Serif',serif] text-[9px] leading-3",
        !disabled && 'font-bold',
      )}
    >
      <option>{value}</option>
    </select>
    <Chevron className={disabled ? 'text-[#aaa]' : 'text-[#666]'} />
  </div>
);

const Divider = () => <div className="mx-px h-3.5 w-0.5 shrink-0 border-x border-[#a8a8a8]" />;

const menus = ['文件(F)', '编辑(E)', '视图(V)', '插入(I)', '格式(O)', '工具(T)', '绘图(D)', '标注(N)', '修改(M)', '参数(P)', '窗口(W)', '帮助(H)'];

const TitleBar = () => (
  <header className="relative flex h-6 items-center border-t border-[#b5b5b5] bg-white">
    <div className="mt-1.5 ml-8 flex h-[18px] w-[141px] shrink-0 items-center border border-[#6f6f6f] bg-[#a6a6a6] text-[#222]">
      <button title="new" className="ml-0.5 flex w-[18px] justify-center"><Icon name="new" className="size-3.5" /></button>
      <button title="open" className="flex w-[17px] justify-center"><Icon name="open" className="size-3.5" /></button>
      <button title="save" className="flex w-[18px] justify-center"><Icon name="save" className="size-3.5" /></button>
      <button title="undo" className="flex w-[17px] justify-center"><Icon name="undo" className="size-3.5" /></button>
      <Caret className="mx-px size-1" />
      <div className="flex h-full items-center gap-1 bg-[#cbcbcb] pr-4 pl-0.5 text-[#999]">
        <Icon name="redo" className="size-3.5" />
        <Caret className="size-1" />
      </div>
      <button title="print" className="flex w-[18px] justify-center"><Icon name="print" className="size-3.5" /></button>
      <Caret className="ml-px size-1.5" />
    </div>
    <h1 className="ml-[156px] flex shrink-0 gap-3.5 font-['Open_Sans','Noto_Sans',sans-serif] text-[10px] leading-4 text-[#222]">
      <span>AutoCAD 2010</span>
      <span>Drawing1.dwg</span>
    </h1>
    <div className="mr-[35px] ml-auto flex h-[18px] w-[248px] shrink-0 items-center border border-[#7c7c7c] bg-[#a9a9a9] text-[#222]">
      <button aria-label="expand search" className="flex w-2.5 justify-center"><Caret className="size-1.5 -rotate-90" /></button>
      <input
        aria-label="search"
        placeholder="键入关键字或短语"
        className="h-full w-[137px] border-x border-[#888] bg-[#f6f6f6] pl-[3px] text-[9px] italic placeholder:text-[#777]"
      />
      <button title="search" className="flex w-5 justify-center"><Icon name="binoculars" className="size-3.5" /></button>
      <Caret className="mr-[3px] size-1" />
      <button title="subscription" className="flex w-[17px] justify-center"><Icon name="key" className="size-3.5" /></button>
      <button title="communication" className="flex w-[18px] justify-center"><Icon name="dish" className="size-3.5" /></button>
      <button title="favorites" className="flex w-[17px] justify-center"><Icon name="star" className="size-3.5" /></button>
      <button title="help" className="flex w-[18px] justify-center"><Icon name="helpRound" className="size-3.5" /></button>
      <Caret className="ml-px size-1" />
    </div>
    <svg viewBox="0 0 76 10" className="mr-3.5 h-2.5 w-[76px] shrink-0" fill="none" stroke="#a0a0a0" role="img" aria-label="window controls">
      <path d="M0 5.500h8M35 1.500h7.500v7.500H35zM68 1l8 8M76 1l-8 8" />
    </svg>
    <button
      aria-label="application menu"
      className="absolute top-1.5 left-px z-10 flex h-[31px] w-[30px] items-center border border-[#666] bg-linear-to-b from-[#c4c4c4] to-[#858585] text-[#333]"
    >
      <svg viewBox="0 0 24 28" className="h-7 w-[22px] shrink-0">
        <path d="M3 24L10 4l6-2 6 17-6 3-1-3-4 1-2 4z" fill="#c81e22" />
        <path d="M3 24L10 4l3 1-4 19z" fill="#f0484a" />
        <path d="M11 15l2-6 2 6z" fill="#7d0f12" />
        <path d="M16 2l6 17-6 3z" fill="#a3151a" />
      </svg>
      <Caret className="size-1" />
    </button>
  </header>
);

const MenuBar = () => (
  <nav className="flex h-4 items-center gap-[19px] bg-linear-to-b from-[#969696] to-[#666] pl-[42px] text-[9px] leading-4 text-[#f2f2f2]">
    {menus.map((menu) => (
      <button key={menu} className="shrink-0">{menu}</button>
    ))}
    <svg viewBox="0 0 34 10" className="mr-[3px] ml-auto h-2.5 w-[34px]" fill="none" stroke="#f2f2f2" role="img" aria-label="document controls">
      <path d="M1 7h7M27 2l5 6M32 2l-5 6" strokeWidth="2" />
      <path d="M14.500 3.500h5v5h-5zM16.500 3.500v-2h5v5h-2" />
    </svg>
  </nav>
);

const TopToolbars = () => (
  <div className="flex flex-col gap-[3px] overflow-hidden pt-px pb-1 pl-px">
    <div className="flex h-[17px]">
      <Grip />
      <IconStrip
        className="w-[499px]"
        items="new open save | print preview publish dwf markup | cut copyClip paste matchProps blockEdit | undo v redo v | pan zoom zoomWindow zoomPrev | props designCenter toolPalette sheetSet markupSet calc | help"
      />
      <div className="w-[3px] shrink-0" />
      <Grip />
      <div className="flex items-center bg-[#ececec]">
        <ListBox label="color" value="ByLayer" className="w-[117px]">
          <div className="size-2 border border-[#333] bg-white" />
        </ListBox>
        <Divider />
        <ListBox label="linetype" value="ByLayer" className="w-[121px]">
          <div className="h-px w-[43px] bg-[#333]" />
        </ListBox>
        <Divider />
        <ListBox label="lineweight" value="ByLayer" className="w-[96px]">
          <div className="h-px w-[25px] bg-[#333]" />
        </ListBox>
        <Divider />
        <ListBox label="plot style" value="BYCOLOR" className="w-[89px]" disabled />
      </div>
    </div>
    <div className="flex h-[17px] gap-0.5">
      <div className="flex">
        <Grip />
        <IconStrip className="w-[147px]" items="drawOrder | editHatch editPline editSpline | attrEdit blockAttr syncAttr extractAttr" />
      </div>
      <div className="flex">
        <Grip />
        <IconStrip className="w-[53px]" items="orbit freeOrbit contOrbit" />
      </div>
      <div className="flex">
        <Grip />
        <IconStrip className="w-[112px]" items="wire2d | wire3d hidden3d realistic conceptual | visualMgr" />
      </div>
      <div className="flex">
        <Grip />
        <IconStrip className="w-5" items="layerMgr" />
        <ListBox label="layer" value="0" className="w-[228px]">
          <div className="flex items-center">
            <Icon name="bulb" className="size-3" />
            <Icon name="sun" className="size-3" />
            <Icon name="vpFreeze" className="size-3.5" />
            <Icon name="unlock" className="size-3.5" />
            <div className="size-2 border border-[#333] bg-white" />
          </div>
        </ListBox>
        <IconStrip className="w-[52px]" items="layerCurrent layerPrev layerState" />
        <Grip />
        <IconStrip
          className="w-[320px]"
          items="track snapFrom | endpoint midpoint intersection apparent extension | center quadrant tangent | perpendicular parallel insertion nodeSnap | nearest snapNone | snapSettings"
        />
      </div>
    </div>
  </div>
);

interface FloatingBarProps {
  className: string;
  children: ReactNode;
}

const FloatingBar = ({ className, children }: FloatingBarProps) => (
  <div className={clsx('absolute flex h-[18px] border border-[#707070]', className)}>
    <Grip />
    {children}
    <button aria-label="close" className="flex w-1.5 justify-center bg-[#606060] pt-0.5 text-white">
      <svg viewBox="0 0 6 6" className="size-1.5" stroke="currentColor" strokeWidth="1.400">
        <path d="M1 1l4 4M5 1L1 5" />
      </svg>
    </button>
  </div>
);

const Canvas = () => (
  <div className="relative min-w-0 flex-1 bg-black">
    <svg className="absolute inset-0 h-full w-full overflow-visible" fill="none">
      <rect x="193.500" y="137.500" width="270" height="135" stroke="#d8d8d8" />
      <path d="M-2 84l13-1-1 3 50 24.500L130 148 60 115 9 91.500 6 94z" fill="#f83b36" />
    </svg>
    <svg className="absolute bottom-0 left-0 h-20 w-20" fill="none" stroke="#c9c9c9">
      <path d="M7.500 64.500h8v8h-8zM11.500 64V31M8 31l3.500-9 3.500 9zM16 68.500h32M48 65l9 3.500-9 3.500z" />
      <g fill="#c9c9c9" stroke="none" className="font-['Liberation_Sans',sans-serif] text-[13px]">
        <text x="8" y="15">Y</text>
        <text x="65" y="73">X</text>
      </g>
    </svg>
    <FloatingBar className="top-[23px] left-[49px]">
      <IconStrip
        className="w-[397px]"
        items="polysolid box wedge cone sphere cylinder torus pyramid helix planar | extrude presspull sweep revolve loft | union subtract intersect | move3d rotate3d align3d array3d"
      />
    </FloatingBar>
    <FloatingBar className="top-[43px] left-[52px]">
      <IconStrip
        className="w-[244px]"
        items="namedViews | viewTop viewBottom viewLeft viewRight viewFront viewBack | isoSW isoSE isoNE isoNW | camera | viewPrev"
      />
      <div className="flex w-[106px] items-center justify-end bg-[#cdcdcd] pr-1 text-[#aaa]">
        <Chevron />
      </div>
    </FloatingBar>
    <FloatingBar className="top-[67px] left-[75px]">
      <IconStrip
        className="w-[313px]"
        items="erase copy mirror offset array move rotate scale stretch trim lengthen extend breakAt break join chamfer fillet explode"
      />
    </FloatingBar>
  </div>
);

const TabEdge = () => (
  <svg viewBox="0 0 6 12" className="mx-1 h-3 w-1.5 shrink-0" fill="none" stroke="#333">
    <path d="M5.500 1l-5 10" />
  </svg>
);

const SheetTabs = () => (
  <div className="flex h-[13px] shrink-0 items-center border-t border-[#888] bg-[#f0f0f0] text-[9px] leading-3 text-[#222]">
    <div className="flex w-11 shrink-0 justify-around text-[#666]">
      {['M2 1v6M7 1L3 4l4 3z', 'M6 1L2 4l4 3z', 'M2 1l4 3-4 3z', 'M6 1v6M1 1l4 3-4 3z'].map((d) => (
        <button key={d} aria-label="scroll tabs" className="border-r border-[#bbb] pr-0.5">
          <svg viewBox="0 0 8 8" className="size-2" fill="currentColor" stroke="currentColor" strokeWidth=".8"><path d={d} /></svg>
        </button>
      ))}
    </div>
    <button className="h-full w-8 shrink-0 bg-black text-center text-white [clip-path:polygon(0_0,100%_0,88%_100%,16%_100%)]">模型</button>
    <button className="ml-1 shrink-0">布局1</button>
    <TabEdge />
    <button className="shrink-0">布局2</button>
    <TabEdge />
    <div className="ml-auto flex h-full w-[328px] items-center border-l-4 border-[#cfcfcf] text-[#333]">
      <Chevron className="ml-px rotate-90" />
      <div className="mr-1 ml-auto h-2.5 w-3 bg-[#d6d6d6]" />
      <Chevron className="mr-[17px] -rotate-90" />
    </div>
  </div>
);

const CommandText = ({ text }: { text: string }) => (
  <span className="flex h-[13px] items-center leading-3 whitespace-pre">
    {text.split(/([\x20-\x7e]+)/).map((part, i) => (
      <span key={i} className={i % 2 ? "font-['Liberation_Mono',monospace] text-[10px] leading-3" : 'text-[12px] leading-3'}>
        {part}
      </span>
    ))}
  </span>
);

const CommandWindow = () => (
  <section className="flex h-[46px] shrink-0 border-t border-[#444] bg-white text-[#333]">
    <div className="w-3 shrink-0 bg-[#a3a3a3] pt-1 pl-px">
      <div className="h-[3px] w-2 border-y border-[#666]" />
    </div>
    <div className="flex min-w-0 flex-1 flex-col pl-0.5">
      <div className="h-[31px] border-b border-[#c4c4c4]">
        <CommandText text="指定第一个角点或 [倒角(C)/标高(E)/圆角(F)/厚度(T)/宽度(W)]:" />
        <CommandText text="指定另一个角点或 [面积(A)/尺寸(D)/旋转(R)]:" />
      </div>
      <div className="flex flex-1 items-center">
        <label htmlFor="command"><CommandText text="命令:" /></label>
        <input id="command" className="h-3 min-w-0 flex-1 text-[12px] outline-none" />
        <div className="flex h-full w-[52px] items-center bg-[#f0f0f0] pl-0.5 text-[#444]">
          <Chevron className="rotate-90" />
          <div className="ml-0.5 h-full w-3 bg-[#cdcdcd]" />
          <Chevron className="mr-1 ml-auto -rotate-90" />
        </div>
      </div>
    </div>
    <div className="flex w-3 shrink-0 flex-col items-center bg-[#f0f0f0] pt-1 text-[#444]">
      <Chevron className="rotate-180" />
      <Chevron className="mt-2" />
    </div>
  </section>
);

const modes = [
  { label: '捕捉', width: 'w-[23px]' },
  { label: '栅格', width: 'w-[23px]' },
  { label: '正交', width: 'w-[23px]' },
  { label: '极轴', width: 'w-[23px]', on: true },
  { label: '对象捕捉', width: 'w-[41px]', on: true },
  { label: '对象追踪', width: 'w-[41px]', on: true },
  { label: 'DUCS', width: 'w-[22px]' },
  { label: 'DYN', width: 'w-[18px]' },
  { label: '线宽', width: 'w-[22px]' },
  { label: 'QP', width: 'w-[14px]' },
];

const StatusButton = ({ name }: { name: string }) => (
  <button title={name} className="flex h-full w-[17px] items-center justify-center border-r border-[#777] bg-[#a9a9a9]">
    <Icon name={name} className="size-3.5" />
  </button>
);

const StatusBar = () => (
  <footer className="flex h-[17px] shrink-0 items-center bg-linear-to-b from-[#a0a0a0] to-[#7a7a7a] font-['Liberation_Mono','Noto_Sans_CJK_SC',monospace] text-[#111]">
    <div className="w-[164px] shrink-0 pl-2 text-[8px] whitespace-pre">4356.2507, 280.6456 , 0.0000</div>
    {modes.map(({ label, width, on }) => (
      <button
        key={label}
        aria-pressed={!!on}
        className={clsx(
          'h-full shrink-0 border-r border-[#6d6d6d] whitespace-nowrap',
          /[A-Z]/.test(label) ? 'text-[8px]' : 'text-[9px]',
          on ? 'bg-[#a5d8e4]' : 'bg-[#a9a9a9]',
          width,
        )}
      >
        {label}
      </button>
    ))}
    <div className="mr-3.5 ml-auto flex h-full shrink-0">
      <button className="h-full w-[23px] border-r border-[#777] bg-[#a9a9a9] text-[9px]">模型</button>
      <StatusButton name="layoutSpace" />
      <StatusButton name="quickView" />
    </div>
    <div className="mr-3.5 flex h-full shrink-0">
      <StatusButton name="pan" />
      <StatusButton name="zoom" />
      <StatusButton name="wheel" />
      <StatusButton name="showMotion" />
    </div>
    <div className="mr-1 flex h-full shrink-0">
      <button className="flex h-full w-[41px] items-center gap-px border-r border-[#777] bg-[#a9a9a9] text-[8px]">
        <Icon name="annoScale" className="size-3.5" />
        1:1
        <Caret className="ml-0.5 size-1.5" />
      </button>
      <StatusButton name="annoVisible" />
      <StatusButton name="annoAuto" />
    </div>
    <div className="flex h-full shrink-0">
      <button className="flex h-full w-[81px] items-center gap-px border-r border-[#777] bg-[#a9a9a9] text-[8px] whitespace-nowrap">
        <Icon name="gear" className="size-3.5" />
        AutoCAD <span className="ml-0.5 text-[9px]">经典</span>
        <Caret className="ml-0.5 size-1.5" />
      </button>
      <StatusButton name="padlock" />
    </div>
    <button aria-label="status bar menu" className="ml-1.5 flex w-2 justify-center"><Caret /></button>
    <StatusButton name="cleanScreen" />
    <svg viewBox="0 0 12 12" className="ml-0.5 size-3 shrink-0 self-end" fill="#e5e5e5">
      <path d="M9 0h2v2H9zM6 3h2v2H6zM9 3h2v2H9zM3 6h2v2H3zM6 6h2v2H6zM9 6h2v2H9zM0 9h2v2H0zM3 9h2v2H3zM6 9h2v2H6zM9 9h2v2H9z" />
    </svg>
  </footer>
);

// Vertical subtitle lines that float over everything, the yellow part marks what has been sung
const Lyrics = () => (
  <div className="pointer-events-none absolute inset-0 z-20 text-[21px] leading-[21px] text-white">
    <p className="absolute top-[41px] right-[84px] w-[21px] break-all [paint-order:stroke_fill] [-webkit-text-stroke:2px_#444]">
      悲伤的呜咽
    </p>
    <p className="absolute top-[263px] right-12 w-[21px] bg-linear-to-b from-[#f5f000] from-[17px] to-white to-[17px] bg-clip-text break-all text-transparent">
      直到夜里她转头听见
    </p>
  </div>
);

const Watermark = () => (
  <div className="pointer-events-none absolute right-[52px] bottom-5 z-20 w-[180px] font-['Liberation_Sans','Noto_Sans_CJK_SC',sans-serif] text-white opacity-70 [paint-order:stroke_fill] [-webkit-text-stroke:1px_#c8c8c8]">
    <div className="flex items-end leading-[38px] font-bold">
      <span className="w-[62px] text-[38px]">Bai</span>
      <svg viewBox="0 0 52 58" className="h-[58px] w-[52px] shrink-0" fill="#fff">
        <ellipse cx="7" cy="22" rx="6" ry="8" />
        <ellipse cx="20" cy="10" rx="6" ry="9" />
        <ellipse cx="36" cy="11" rx="6" ry="9" transform="rotate(8 36 11)" />
        <ellipse cx="46" cy="25" rx="6" ry="8" />
        <path d="M27 25c8 0 9 7 15 12 9 7 7 20-5 20-5 0-7-1-10-1s-6 1-11 1C4 57 2 44 11 37c7-5 8-12 16-12z" stroke="#ccc" strokeWidth="1" />
        <text x="14" y="51" fontSize="21" fill="#fff" stroke="#bbb" strokeWidth="1">du</text>
      </svg>
      <span className="ml-1 text-[30px] whitespace-nowrap">经验</span>
    </div>
    <p className="text-[22px] leading-[26px] whitespace-nowrap">jingyan.baidu.com</p>
  </div>
);

const App = () => (
  <div className="relative flex min-h-screen flex-col overflow-hidden bg-[#eef1f0] font-['Noto_Sans_CJK_SC','Noto_Sans',sans-serif]">
    <div className="flex flex-1">
      <aside className="flex w-1.5 shrink-0 flex-col border-r border-[#bbb] bg-[#e2e2e2]">
        <div className="mt-[55px] h-3 w-full bg-[#1f8fd0]" />
      </aside>
      <main className="flex min-w-0 flex-1 flex-col bg-[#6a6a6a]">
        <TitleBar />
        <MenuBar />
        <TopToolbars />
        <div className="flex flex-1">
          <div className="flex w-[23px] shrink-0 flex-col pl-px">
            <div className="w-[18px] border border-[#4b4b4b]">
              <Grip vertical />
              <IconStrip
                vertical
                className="h-[317px]"
                items="line xline pline polygon rect arc circle revcloud spline ellipse ellipseArc insertBlock makeBlock point hatch gradient region table mtext"
              />
            </div>
          </div>
          <div className="mt-px mb-px flex min-w-0 flex-1 flex-col border-t border-l border-[#a0a0a0]">
            <div className="flex flex-1">
              <Canvas />
              <div className="flex w-[13px] shrink-0 flex-col items-center bg-[#f0f0f0] py-0.5 text-[#444]">
                <Chevron className="rotate-180" />
                <div className="mt-0.5 h-[13px] w-[11px] bg-[#cdcdcd]" />
                <Chevron className="mt-auto" />
              </div>
              <div className="w-0.5 shrink-0 bg-[#8d8d8d]" />
            </div>
            <SheetTabs />
          </div>
          <div className="flex w-6 shrink-0 flex-col pl-[3px]">
            <div className="w-[18px] border border-[#4b4b4b]">
              <Grip vertical />
              <IconStrip
                vertical
                className="h-[371px]"
                items="dimLinear dimAligned dimArc dimOrdinate | dimRadius dimJogged dimDiameter dimAngular | dimQuick dimBaseline dimContinue dimSpace dimBreak | tolerance centerMark inspect dimJogLine | dimEdit dimTextEdit dimUpdate | dimStyle"
              />
            </div>
          </div>
        </div>
        <CommandWindow />
        <StatusBar />
      </main>
      <aside className="flex w-1.5 shrink-0 flex-col bg-[#ececec]">
        <div className="mt-[200px] h-[117px] bg-[#b3b3b3]" />
        <div className="mt-[70px] h-[30px] w-1 self-end bg-[#777]" />
      </aside>
    </div>
    <div className="h-1.5 shrink-0 bg-[#e6f1ee]" />
    <Lyrics />
    <Watermark />
  </div>
);

export default App;
